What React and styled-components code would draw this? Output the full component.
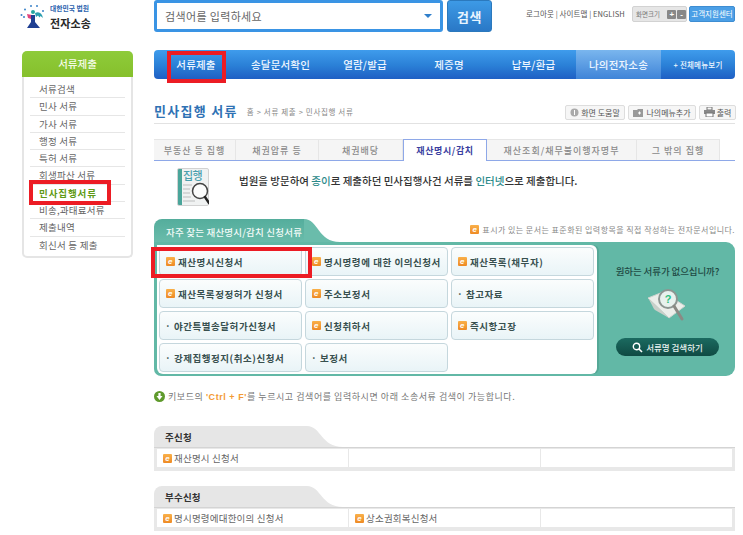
import React from 'react';
import styled, { createGlobalStyle } from 'styled-components';

const GlobalStyle = createGlobalStyle`
  html, body {
    margin: 0;
    padding: 0;
    background: #fff;
  }
  body {
    font-family: "Noto Sans CJK KR", "Liberation Sans", sans-serif;
    color: #555;
    overflow: hidden;
  }
  * { box-sizing: border-box; }
`;

const Page = styled.div`
  width: 743px;
  height: 535px;
  overflow: hidden;
  position: relative;
`;

const Header = styled.header`
  display: flex;
  height: 50px;
  padding-left: 20px;
`;

const LogoBlock = styled.div`
  width: 134px;
  display: flex;
  align-items: flex-start;
  padding-top: 3px;
  gap: 5px;
`;

const LogoText = styled.div`
  display: flex;
  flex-direction: column;
  gap: 3px;
`;

const LogoSmall = styled.span`
  font-size: 6.8px;
  line-height: 10px;
  font-weight: 700;
  color: #2b62ad;
  white-space: nowrap;
`;

const LogoBig = styled.span`
  font-size: 11px;
  line-height: 14px;
  font-weight: 700;
  letter-spacing: 0.1px;
  color: #2a2a2a;
  white-space: nowrap;
`;

const SearchBox = styled.div`
  width: 289px;
  height: 32px;
  border: 3px solid #3a94e4;
  border-radius: 3px;
  display: flex;
  align-items: center;
  justify-content: space-between;
  padding: 0 8px 0 8px;
  font-size: 11px;
  color: #666;
  letter-spacing: 0.35px;
`;

const Caret = styled.span`
  width: 0;
  height: 0;
  border-left: 4px solid transparent;
  border-right: 4px solid transparent;
  border-top: 4px solid #2f7fcb;
`;

const SearchButton = styled.div`
  width: 45px;
  height: 32px;
  margin-left: 4px;
  border-radius: 3px;
  border: 1px solid #2b79bd;
  background: linear-gradient(#3d9ae6, #2a78c6);
  color: #e8f4ff;
  font-size: 13px;
  font-weight: 700;
  display: flex;
  align-items: center;
  justify-content: center;
  letter-spacing: 0.5px;
`;

const Utility = styled.div`
  display: flex;
  align-items: flex-start;
  margin-left: 34px;
  padding-top: 6px;
`;

const UtilLinks = styled.span`
  width: 106px;
  font-size: 7.5px;
  line-height: 16px;
  letter-spacing: 0.08px;
  white-space: nowrap;
  color: #555;
`;

const SizeBox = styled.div`
  width: 55px;
  height: 16px;
  background: #e6e6e6;
  border: 1px solid #d2d2d2;
  border-radius: 2px;
  display: flex;
  align-items: center;
  padding-left: 3px;
  gap: 1px;
  font-size: 6.5px;
  color: #777;
`;

const SizeLabel = styled.span`
  width: 31px;
  white-space: nowrap;
`;

const SizeKey = styled.span`
  width: 9px;
  height: 9px;
  background: #888;
  color: #fff;
  border-radius: 1px;
  font-size: 8px;
  line-height: 9px;
  font-weight: 700;
  text-align: center;
  font-family: "Liberation Sans", sans-serif;
`;

const HelpCenter = styled.div`
  width: 46px;
  height: 16px;
  margin-left: 2px;
  background: #4b9fe6;
  border: 1px solid #3e8dd2;
  border-radius: 2px;
  color: #fff;
  font-size: 7.5px;
  line-height: 14px;
  text-align: center;
  white-space: nowrap;
`;

const Body = styled.div`
  display: flex;
  padding-left: 22px;
  align-items: flex-start;
`;

const Sidebar = styled.aside`
  width: 111px;
  margin-top: 1px;
  margin-right: 21px;
  position: relative;
  border-radius: 5px;
  border: 2px solid #e5e5e5;
  border-top: 0;
  background: #fff;
  padding-bottom: 2px;
`;

const SideTitle = styled.div`
  height: 26px;
  margin: 0 -2px 4px;
  background: linear-gradient(#8ecb3a, #86c02c);
  border-radius: 5px 5px 0 0;
  color: #f4fbe6;
  font-size: 10.5px;
  font-weight: 500;
  line-height: 26px;
  text-align: center;
`;

const SideItem = styled.div`
  height: 17.3px;
  margin: 0 6px;
  padding-left: 9px;
  font-size: 9.5px;
  line-height: 17px;
  letter-spacing: ${(p) => (p.$active ? '0.9px' : '0.25px')};
  white-space: nowrap;
  color: ${(p) => (p.$active ? '#5f9a14' : '#666')};
  font-weight: ${(p) => (p.$active ? 700 : 400)};
  border-bottom: ${(p) => (p.$last ? '0' : '1px solid #e6e6e6')};
`;

const Mark = styled.div`
  position: absolute;
  left: ${(p) => p.$l}px;
  top: ${(p) => p.$t}px;
  width: ${(p) => p.$w}px;
  height: ${(p) => p.$h}px;
  border: 4px solid #ec1c24;
  pointer-events: none;
  z-index: 5;
`;

const Main = styled.main`
  width: 581px;
  position: relative;
`;

const Nav = styled.nav`
  height: 29px;
  display: grid;
  grid-template-columns: 84px 85px 84px 84px 85px 85px 74px;
  background: linear-gradient(#3f9cec, #2a7fd6 55%, #1f5fc4);
  border-radius: 4px;
  overflow: hidden;
`;

const NavItem = styled.div`
  display: flex;
  align-items: center;
  justify-content: center;
  color: #eef6ff;
  font-weight: 500;
  white-space: nowrap;
  letter-spacing: 0.2px;
  background: ${(p) => (p.$current ? 'linear-gradient(#7ab6ee, #3f84d8)' : 'none')};
  font-size: ${(p) => (p.$small ? '7.5px' : '10.5px')};
`;

const TitleRow = styled.div`
  display: flex;
  align-items: center;
  height: 19px;
  margin-top: 25px;
  padding-bottom: 3px;
`;

const PageTitle = styled.h1`
  margin: -3px 0 0;
  font-size: 13px;
  font-weight: 700;
  color: #2f72b4;
  letter-spacing: 1.3px;
  white-space: nowrap;
`;

const Crumb = styled.span`
  margin: -1px 0 0 9px;
  font-size: 7.5px;
  color: #888;
  letter-spacing: 0.65px;
  white-space: nowrap;
`;

const ToolGroup = styled.div`
  margin-left: auto;
  display: flex;
  gap: 3px;
  margin-right: -1px;
`;

const ToolButton = styled.div`
  height: 15px;
  width: ${(p) => p.$w}px;
  display: flex;
  align-items: center;
  justify-content: center;
  gap: 2px;
  border: 1px solid #ddd;
  border-radius: 2px;
  background: #f6f6f6;
  font-size: 8px;
  color: #555;
  white-space: nowrap;
`;

const Rule = styled.div`
  height: 1px;
  background: #e2e2e2;
`;

const Tabs = styled.div`
  display: flex;
  margin-top: 15px;
  height: 22px;
  border-bottom: 1px solid #8ea8e8;
`;

const Tab = styled.div`
  width: ${(p) => p.$w}px;
  height: ${(p) => (p.$on ? '22px' : '21px')};
  display: flex;
  align-items: center;
  justify-content: center;
  font-size: 9px;
  letter-spacing: ${(p) => (p.$on ? '0.6px' : '1px')};
  white-space: nowrap;
  color: ${(p) => (p.$on ? '#3b3fa0' : '#8a8a8a')};
  font-weight: ${(p) => (p.$on ? 700 : 500)};
  background: ${(p) => (p.$on ? '#fff' : '#f5f5f5')};
  border: ${(p) => (p.$on ? '1px solid #8ea8e8' : '1px solid #e6e6e6')};
  border-bottom: ${(p) => (p.$on ? '0' : 'none')};
  border-left: ${(p) => (p.$on ? '1px solid #8ea8e8' : '0')};
  position: relative;
  z-index: 1;
`;

const Notice = styled.div`
  height: 58px;
  display: flex;
  align-items: flex-start;
  padding: 7px 0 0 23px;
`;

const NoticeIcon = styled.div`
  width: 32px;
  height: 38px;
  position: relative;
  background: linear-gradient(90deg, #4aa59a 0 4px, #f0f2f2 4px);
  border: 1px solid #d2d2d2;
  border-radius: 2px;
`;

const NoticeIconLabel = styled.span`
  position: absolute;
  top: 0;
  left: 5px;
  font-size: 11px;
  line-height: 13px;
  font-weight: 500;
  color: #4a9fae;
  letter-spacing: -0.6px;
  white-space: nowrap;
`;

const NoticeText = styled.p`
  margin: 0 0 0 30px;
  padding-top: 5px;
  font-size: 10.5px;
  line-height: 15px;
  font-weight: 500;
  color: #333;
  white-space: nowrap;
`;

const Accent = styled.span`
  color: #2c8a8a;
`;

const TabHead = styled.div`
  display: flex;
  align-items: flex-end;
  height: ${(p) => p.$h}px;
`;

const TabHeadLabel = styled.div`
  height: 100%;
  width: ${(p) => p.$w}px;
  padding-left: ${(p) => p.$pad}px;
  border-radius: 8px 0 0 0;
  background: ${(p) => p.$bg};
  color: ${(p) => p.$fg};
  font-size: ${(p) => p.$size}px;
  font-weight: ${(p) => p.$weight};
  line-height: ${(p) => p.$lh}px;
  white-space: nowrap;
  letter-spacing: 0.2px;
`;

const DocMark = styled.span`
  flex: none;
  display: inline-block;
  width: 9px;
  height: 9px;
  border-radius: 1px;
  background: linear-gradient(#f9b04a, #ee8a24);
  color: #fff;
  font: italic 700 8px/9px "Liberation Sans", sans-serif;
  text-align: center;
`;

const HintRow = styled.div`
  margin-left: auto;
  align-self: center;
  display: flex;
  align-items: center;
  gap: 3px;
  font-size: 8px;
  letter-spacing: 0.45px;
  color: #888;
  white-space: nowrap;
  margin-bottom: 2px;
`;

const Panel = styled.section`
  display: flex;
  height: 134px;
  position: relative;
  background: #62b8a6;
  border-radius: 0 9px 9px 7px;
  padding: 3px 0 2px 3px;
`;

const PanelBoard = styled.div`
  width: 440px;
  background: #fff;
  border-radius: 0 6px 6px 6px;
  box-shadow: 2px 0 0 #55a897;
  padding: 2px 3px 0 2px;
  display: grid;
  grid-template-columns: repeat(3, 143px);
  grid-auto-rows: 29px;
  gap: 3px;
`;

const Cell = styled.div`
  display: flex;
  align-items: center;
  gap: 3px;
  padding-left: ${(p) => (p.$plain ? '5px' : '6px')};
  border: 1px solid #c5d7dd;
  border-radius: 4px;
  background: linear-gradient(#fbfdfd, #e9f4f7);
  font-size: 9.5px;
  font-weight: 700;
  letter-spacing: 0.55px;
  color: #38504f;
  white-space: nowrap;
`;

const PanelAside = styled.div`
  flex: 1;
  display: flex;
  flex-direction: column;
  align-items: center;
  padding: 19px 0 0 3px;
`;

const AsideTitle = styled.div`
  font-size: 9.5px;
  line-height: 14px;
  font-weight: 500;
  color: #1f4a44;
  letter-spacing: -0.1px;
  white-space: nowrap;
`;

const FindButton = styled.div`
  width: 103px;
  height: 18px;
  margin-top: 14px;
  border-radius: 9px;
  background: linear-gradient(#1b6a60, #0f4a43);
  display: flex;
  align-items: center;
  justify-content: center;
  gap: 3px;
  color: #e6f2ef;
  font-size: 8.5px;
  font-weight: 500;
  white-space: nowrap;
`;

const Tip = styled.div`
  display: flex;
  align-items: center;
  gap: 3px;
  height: 16px;
  margin-top: 12px;
  font-size: 9px;
  letter-spacing: 0.55px;
  color: #777;
  white-space: pre;
`;

const TipDot = styled.span`
  width: 11px;
  height: 11px;
  border-radius: 50%;
  background: #5f9a2c;
  display: flex;
  align-items: center;
  justify-content: center;
`;

const Keys = styled.b`
  color: #f39a34;
  font-family: "Liberation Sans", sans-serif;
  font-size: 9px;
`;

const FormSection = styled.section`
  margin-top: ${(p) => p.$gap}px;
`;

const FormFrame = styled.div`
  height: 24px;
  background: #e8e8e8;
  border-top: 1px solid #d4d4d4;
  padding: 1px 3px 4px;
  display: grid;
  grid-template-columns: repeat(3, 1fr);
  gap: 1px;
`;

const FormCell = styled.div`
  background: #fff;
  display: flex;
  align-items: center;
  gap: 2px;
  padding-left: 6px;
  font-size: 9.5px;
  letter-spacing: 0.2px;
  color: #666;
  white-space: nowrap;
`;

const items = ['서류검색', '민사 서류', '가사 서류', '행정 서류', '특허 서류', '회생파산 서류', '민사집행서류', '비송,과태료서류', '제출내역', '회신서 등 제출'];

const menus = ['서류제출', '송달문서확인', '열람/발급', '제증명', '납부/환급', '나의전자소송'];

const tabs = [
  { label: '부동산 등 집행', w: 82 },
  { label: '채권압류 등', w: 83 },
  { label: '채권배당', w: 84 },
  { label: '재산명시/감치', w: 84, on: true },
  { label: '재산조회/채무불이행자명부', w: 150 },
  { label: '그 밖의 집행', w: 83 },
];

const forms = [
  { label: '재산명시신청서', doc: true },
  { label: '명시명령에 대한 이의신청서', doc: true },
  { label: '재산목록(채무자)', doc: true },
  { label: '재산목록정정허가 신청서', doc: true },
  { label: '주소보정서', doc: true },
  { label: '· 참고자료' },
  { label: '· 야간특별송달허가신청서' },
  { label: '신청취하서', doc: true },
  { label: '즉시항고장', doc: true },
  { label: '· 강제집행정지(취소)신청서' },
  { label: '· 보정서' },
];

const Curve = ({ color, w = 36, h = 23 }) => (
  <svg width={w} height={h} viewBox="0 0 36 23" preserveAspectRatio="none" style={{ flex: 'none' }}>
    <path d="M0 0 C14 0 14 23 36 23 L0 23 Z" fill={color} />
  </svg>
);

const LogoMark = () => (
  <svg width="25" height="26" viewBox="0 0 25 26">
    <g fill="#3a82c8">
      <circle cx="1.5" cy="12" r="1" />
      <circle cx="5" cy="6.5" r="1" />
      <circle cx="11" cy="3" r="1" />
      <circle cx="17" cy="3" r="1" />
      <circle cx="23" cy="8" r="1" />
      <circle cx="4" cy="14" r="1" />
    </g>
    <circle cx="13" cy="9" r="2" fill="#26a6a0" />
    <path d="M15 10 C19 8 22 10 23 15 L20.5 13 L19.5 14.5 L18 12.5 L16 14 Z" fill="#2c9fb0" />
    <path d="M7 11 L12 12 L11 16 L8 15 Z" fill="#e0457e" />
    <path d="M11 12 L15 12 L15 19 L20 25 L7 25 L11 19 Z" fill="#1f3f92" />
  </svg>
);

const MapGlass = () => (
  <svg width="42" height="36" viewBox="0 0 42 36" style={{ marginTop: 10 }}>
    <path d="M1 10 L16 4 L38 18 L22 30 Z" fill="#eceeea" stroke="#cfd4cf" />
    <path d="M1 10 C5 16 6 20 8 22 L22 30 L16 24 Z" fill="#c9cfc9" />
    <circle cx="21" cy="11" r="9" fill="#e8f2ee" stroke="#8d9692" strokeWidth="2" />
    <path d="M27 18 L35 31" stroke="#8a8a84" strokeWidth="3" strokeLinecap="round" />
    <text x="21" y="15" fontSize="11" fontWeight="700" fill="#2fbf7f" textAnchor="middle" fontFamily="Liberation Sans">?</text>
  </svg>
);

const App = () => (
  <Page>
    <GlobalStyle />
    <Header>
      <LogoBlock>
        <LogoMark />
        <LogoText>
          <LogoSmall>대한민국 법원</LogoSmall>
          <LogoBig>전자소송</LogoBig>
        </LogoText>
      </LogoBlock>
      <SearchBox>
        검색어를 입력하세요
        <Caret />
      </SearchBox>
      <SearchButton>검색</SearchButton>
      <Utility>
        <UtilLinks>로그아웃 | 사이트맵 | ENGLISH</UtilLinks>
        <SizeBox>
          <SizeLabel>화면크기</SizeLabel>
          <SizeKey>+</SizeKey>
          <SizeKey>-</SizeKey>
        </SizeBox>
        <HelpCenter>고객지원센터</HelpCenter>
      </Utility>
    </Header>
    <Body>
      <Sidebar>
        <SideTitle>서류제출</SideTitle>
        {items.map((name, i) => (
          <SideItem key={name} $active={i === 6} $last={i === items.length - 1}>
            {name}
          </SideItem>
        ))}
        <Mark $l={5} $t={129} $w={82} $h={25} />
      </Sidebar>
      <Main>
        <Nav>
          {menus.map((name, i) => (
            <NavItem key={name} $current={i === 5}>
              {name}
            </NavItem>
          ))}
          <NavItem $small>+ 전체메뉴보기</NavItem>
        </Nav>
        <Mark $l={13} $t={1} $w={59} $h={32} />
        <TitleRow>
          <PageTitle>민사집행 서류</PageTitle>
          <Crumb>홈 &gt; 서류 제출 &gt; 민사집행 서류</Crumb>
          <ToolGroup>
            <ToolButton $w={60}>
              <svg width="9" height="9" viewBox="0 0 9 9">
                <circle cx="4.5" cy="4.5" r="4" fill="#aaa" />
                <rect x="4" y="2" width="1" height="5" fill="#fff" />
              </svg>
              화면 도움말
            </ToolButton>
            <ToolButton $w={68}>
              <svg width="11" height="9" viewBox="0 0 11 9">
                <path d="M0 2 H4 L5 1 H10 V9 H0 Z" fill="#999" />
                <path d="M5 5 H8 M6.5 3.5 V6.5" stroke="#fff" />
              </svg>
              나의메뉴추가
            </ToolButton>
            <ToolButton $w={37}>
              <svg width="11" height="10" viewBox="0 0 11 10">
                <rect x="3" y="0" width="5" height="3" fill="none" stroke="#777" />
                <rect x="0" y="3" width="11" height="4" fill="#888" />
                <rect x="2" y="6" width="7" height="4" fill="#fff" stroke="#777" />
              </svg>
              출력
            </ToolButton>
          </ToolGroup>
        </TitleRow>
        <Rule />
        <Tabs>
          {tabs.map((t) => (
            <Tab key={t.label} $w={t.w} $on={t.on}>
              {t.label}
            </Tab>
          ))}
        </Tabs>
        <Notice>
          <NoticeIcon>
            <NoticeIconLabel>집행</NoticeIconLabel>
            <svg width="26" height="28" viewBox="0 0 26 28" style={{ position: 'absolute', left: 5, top: 12 }}>
              <g stroke="#d6d8d8" strokeWidth="2">
                <path d="M0 4 H9 M0 8 H7 M0 12 H7 M0 16 H8 M0 20 H12" />
              </g>
              <circle cx="17" cy="10" r="7.5" fill="rgba(255,255,255,.75)" stroke="#444" strokeWidth="1.5" />
              <path d="M22 16 L26 22" stroke="#222" strokeWidth="2.4" strokeLinecap="round" />
            </svg>
          </NoticeIcon>
          <NoticeText>
            법원을 방문하여 <Accent>종이</Accent>로 제출하던 민사집행사건 서류를 <Accent>인터넷</Accent>으로 제출합니다.
          </NoticeText>
        </Notice>
        <TabHead $h={23}>
          <TabHeadLabel $w={150} $pad={12} $bg="linear-gradient(#54ad9c, #6abcab)" $fg="#f3fbf8" $size={9.5} $weight={500} $lh={26}>
            자주 찾는 재산명시/감치 신청서류
          </TabHeadLabel>
          <Curve color="#6abcab" />
          <HintRow>
            <DocMark>e</DocMark>
            표시가 있는 문서는 표준화된 입력항목을 직접 작성하는 전자문서입니다.
          </HintRow>
        </TabHead>
        <Panel>
          <PanelBoard>
            {forms.map((f) => (
              <Cell key={f.label} $plain={!f.doc}>
                {f.doc && <DocMark>e</DocMark>}
                {f.label}
              </Cell>
            ))}
          </PanelBoard>
          <PanelAside>
            <AsideTitle>원하는 서류가 없으십니까?</AsideTitle>
            <MapGlass />
            <FindButton>
              <svg width="11" height="11" viewBox="0 0 11 11">
                <circle cx="4.5" cy="4.5" r="3.2" fill="none" stroke="#fff" strokeWidth="1.4" />
                <path d="M7 7 L10 10" stroke="#fff" strokeWidth="1.6" />
              </svg>
              서류명 검색하기
            </FindButton>
          </PanelAside>
          <Mark $l={-3} $t={5} $w={161} $h={31} />
        </Panel>
        <Tip>
          <TipDot>
            <svg width="7" height="7" viewBox="0 0 7 7">
              <path d="M2.4 0 H4.6 V3 H6.5 L3.5 7 L0.5 3 H2.4 Z" fill="#fff" />
            </svg>
          </TipDot>
          <span>키보드의 <Keys>'Ctrl + F'</Keys>를 누르시고 검색어를 입력하시면 아래 소송서류 검색이 가능합니다.</span>
        </Tip>
        <FormSection $gap={22}>
          <TabHead $h={21}>
            <TabHeadLabel $w={153} $pad={11} $bg="#e6e6e6" $fg="#333" $size={9.5} $weight={700} $lh={22}>
              주신청
            </TabHeadLabel>
            <Curve color="#e6e6e6" h={21} />
          </TabHead>
          <FormFrame>
            <FormCell>
              <DocMark>e</DocMark>재산명시 신청서
            </FormCell>
            <FormCell />
            <FormCell />
          </FormFrame>
        </FormSection>
        <FormSection $gap={15}>
          <TabHead $h={21}>
            <TabHeadLabel $w={153} $pad={11} $bg="#e6e6e6" $fg="#333" $size={9.5} $weight={700} $lh={22}>
              부수신청
            </TabHeadLabel>
            <Curve color="#e6e6e6" h={21} />
          </TabHead>
          <FormFrame>
            <FormCell>
              <DocMark>e</DocMark>명시명령에대한이의 신청서
            </FormCell>
            <FormCell>
              <DocMark>e</DocMark>상소권회복신청서
            </FormCell>
            <FormCell />
          </FormFrame>
        </FormSection>
      </Main>
    </Body>
  </Page>
);

export default App;
